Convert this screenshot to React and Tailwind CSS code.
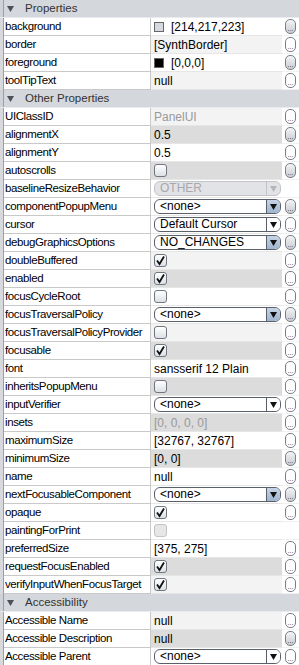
const font = { fontFamily: '"Liberation Sans", Arial, sans-serif' };

const rows = [
  { h: 'Properties' },
  { n: 'background', t: 'color', v: '[214,217,223]', sw: '#d6d9df', bg: 'bg-white', btn: 'g' },
  { n: 'border', v: '[SynthBorder]', bg: 'bg-[#f3f3f3]' },
  { n: 'foreground', t: 'color', v: '[0,0,0]', sw: '#000000', bg: 'bg-white', btn: 'g' },
  { n: 'toolTipText', v: 'null', bg: 'bg-[#f3f3f3]' },
  { h: 'Other Properties' },
  { n: 'UIClassID', v: 'PanelUI', dis: true, bg: 'bg-[#f3f3f3]' },
  { n: 'alignmentX', v: '0.5', bg: 'bg-[#dcdcdc]', btn: 'g' },
  { n: 'alignmentY', v: '0.5', bg: 'bg-white' },
  { n: 'autoscrolls', t: 'check', bg: 'bg-[#dcdcdc]', btn: 'g' },
  { n: 'baselineResizeBehavior', t: 'combo', v: 'OTHER', dis: true, bg: 'bg-white', btn: 'none' },
  { n: 'componentPopupMenu', t: 'combo', v: '<none>', blue: true, bg: 'bg-white', btn: 'g' },
  { n: 'cursor', t: 'combo', v: 'Default Cursor', bg: 'bg-white' },
  { n: 'debugGraphicsOptions', t: 'combo', v: 'NO_CHANGES', blue: true, bg: 'bg-white', btn: 'g' },
  { n: 'doubleBuffered', t: 'check', on: true, bg: 'bg-[#f3f3f3]' },
  { n: 'enabled', t: 'check', on: true, bg: 'bg-[#dcdcdc]' },
  { n: 'focusCycleRoot', t: 'check', bg: 'bg-white' },
  { n: 'focusTraversalPolicy', t: 'combo', v: '<none>', blue: true, bg: 'bg-white', btn: 'g' },
  { n: 'focusTraversalPolicyProvider', t: 'check', bg: 'bg-[#f3f3f3]' },
  { n: 'focusable', t: 'check', on: true, bg: 'bg-[#dcdcdc]' },
  { n: 'font', v: 'sansserif 12 Plain', bg: 'bg-white' },
  { n: 'inheritsPopupMenu', t: 'check', bg: 'bg-[#dcdcdc]' },
  { n: 'inputVerifier', t: 'combo', v: '<none>', bg: 'bg-white' },
  { n: 'insets', v: '[0, 0, 0, 0]', dis: true, bg: 'bg-[#dcdcdc]' },
  { n: 'maximumSize', v: '[32767, 32767]', bg: 'bg-white' },
  { n: 'minimumSize', v: '[0, 0]', bg: 'bg-[#dcdcdc]', btn: 'g' },
  { n: 'name', v: 'null', bg: 'bg-white' },
  { n: 'nextFocusableComponent', t: 'combo', v: '<none>', blue: true, bg: 'bg-white', btn: 'g' },
  { n: 'opaque', t: 'check', on: true, bg: 'bg-white' },
  { n: 'paintingForPrint', t: 'check', dis: true, bg: 'bg-white', btn: 'none' },
  { n: 'preferredSize', v: '[375, 275]', bg: 'bg-white' },
  { n: 'requestFocusEnabled', t: 'check', on: true, bg: 'bg-[#dcdcdc]' },
  { n: 'verifyInputWhenFocusTarget', t: 'check', on: true, bg: 'bg-[#f3f3f3]' },
  { h: 'Accessibility' },
  { n: 'Accessible Name', v: 'null', bg: 'bg-[#f3f3f3]' },
  { n: 'Accessible Description', v: 'null', bg: 'bg-[#dcdcdc]', btn: 'g' },
  { n: 'Accessible Parent', t: 'combo', v: '<none>', bg: 'bg-white' },
];

function Check({ on, dis }) {
  return (
    <div
      className={`w-[13px] h-[13px] rounded-[3px] border flex items-center justify-center ${
        dis ? 'border-[#c4c4c4] bg-[#e6e6e6]' : 'border-[#6f7680] bg-gradient-to-b from-white to-[#dde0e5]'
      }`}
    >
      {on && (
        <svg width="11" height="11" viewBox="0 0 11 11">
          <path d="M2 5.5 L4.5 9 L9 1.5" fill="none" stroke="#111" strokeWidth="1.8" />
        </svg>
      )}
    </div>
  );
}

function Combo({ v, blue, dis }) {
  return (
    <div
      className={`h-[15px] w-full flex rounded-[6px] border overflow-hidden ${
        dis ? 'border-[#c2c4c8] bg-[#e2e3e6]' : 'border-[#5a606a] bg-white'
      }`}
    >
      <div className={`flex-1 pl-[5px] text-[12px] leading-[13px] ${dis ? 'text-[#a7a9ad]' : 'text-black'}`}>{v}</div>
      <div
        className={`w-[14px] flex items-center justify-center border-l ${
          dis ? 'border-[#c2c4c8]' : blue ? 'border-[#5a606a] bg-gradient-to-b from-[#c6d4e6] to-[#9fb4d0]' : 'border-[#5a606a] bg-white'
        }`}
      >
        <svg width="7" height="6" viewBox="0 0 7 6">
          <path d="M0 0 H7 L3.5 6 Z" fill={dis ? '#b5b7bb' : '#111'} />
        </svg>
      </div>
    </div>
  );
}

function Dots({ kind }) {
  if (kind === 'none') return <div className="w-[17px]" />;
  return (
    <div className="w-[17px] flex items-center justify-center">
      <div
        className={`w-[11px] h-[15px] rounded-[5px] border border-[#7a7f88] flex items-end justify-center text-[7px] leading-[8px] text-[#333] ${
          kind === 'g' ? 'bg-gradient-to-b from-[#f3f4f6] to-[#c9ccd2]' : 'bg-white'
        }`}
      >
        ...
      </div>
    </div>
  );
}

function Row({ r }) {
  if (r.h) {
    return (
      <div className="h-[18px] flex items-center bg-[#d4d7dc] border-b border-[#e8eaed]">
        <div className="w-[4px] self-stretch border-r border-[#9a9ea5] bg-[#cfd2d7]" />
        <svg className="ml-[3px]" width="7" height="6" viewBox="0 0 7 6">
          <path d="M0 0 H7 L3.5 6 Z" fill="#4c5058" />
        </svg>
        <span className="ml-[11px] text-[11.5px] text-[#333]">{r.h}</span>
      </div>
    );
  }
  let val;
  if (r.t === 'check') val = <Check on={r.on} dis={r.dis} />;
  else if (r.t === 'combo') val = <Combo v={r.v} blue={r.blue} dis={r.dis} />;
  else if (r.t === 'color')
    val = (
      <div className="flex items-center gap-[7px]">
        <div className="w-[10px] h-[10px] border border-[#666]" style={{ background: r.sw }} />
        <span>{r.v}</span>
      </div>
    );
  else val = <span className={r.dis ? 'text-[#999]' : 'text-black'}>{r.v}</span>;

  return (
    <div className="h-[18px] flex">
      <div className="w-[4px] border-r border-[#9a9ea5] bg-[#d7d9dd]" />
      <div className="w-[147px] bg-white border-b border-r border-[#c9c9c9] pl-[1px] flex items-center text-[11.5px] tracking-[-0.4px] text-black whitespace-nowrap overflow-hidden">
        {r.n}
      </div>
      <div
        className={`flex-1 border-b border-[#e6e6e6] flex items-center pl-[3px] ${
          r.t === 'combo' ? 'pr-[1px]' : 'pr-[3px]'
        } text-[12px] ${r.bg}`}
      >
        {val}
      </div>
      <div className="bg-white border-b border-[#f0f0f0] flex">
        <Dots kind={r.btn || 'w'} />
      </div>
    </div>
  );
}

export default function App() {
  return (
    <div className="w-[299px] h-[665px] overflow-hidden bg-white" style={font}>
      {rows.map((r, i) => (
        <Row key={i} r={r} />
      ))}
    </div>
  );
}
